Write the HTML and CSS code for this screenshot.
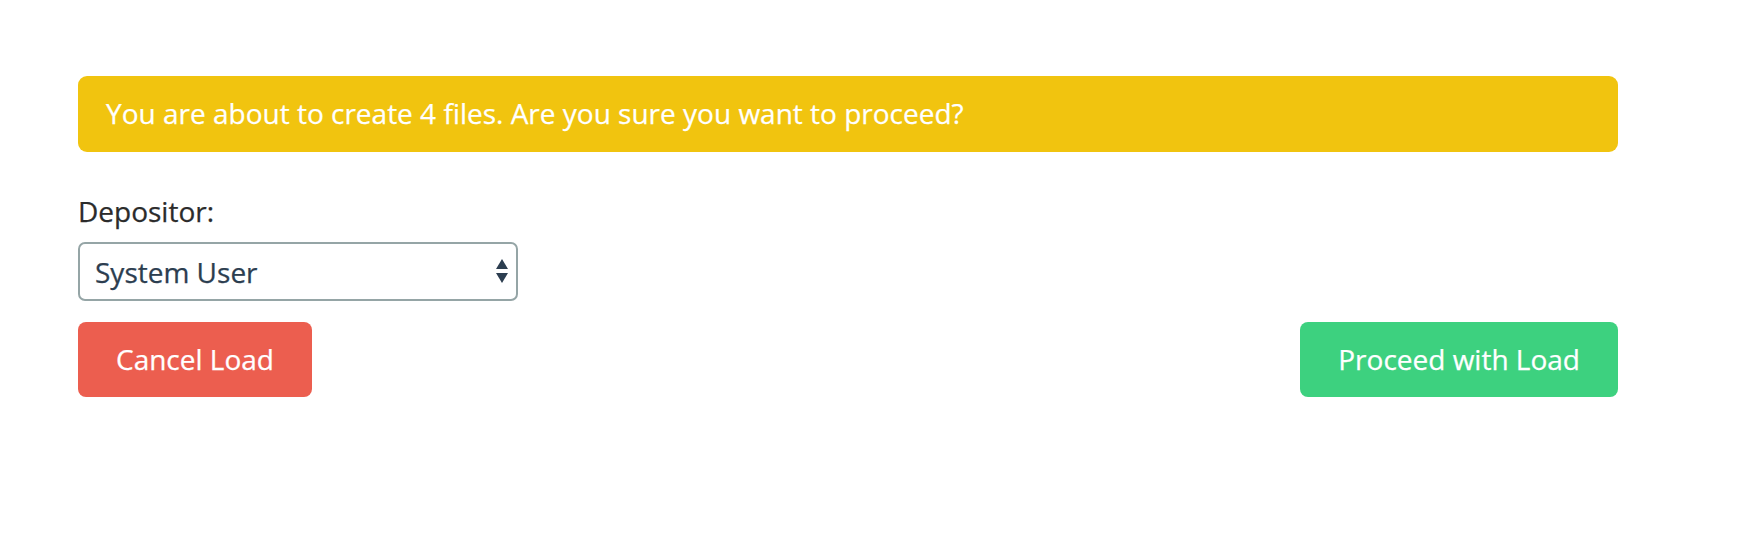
FILE: index.html
```html
<!DOCTYPE html>
<html lang="en">
<head>
<meta charset="utf-8">
<title>Confirm Load</title>
<link rel="stylesheet" href="styles.css">
</head>
<body>
<main class="page">
  <div class="alert">You are about to create 4 files. Are you sure you want to proceed?</div>
  <label class="label" for="depositor">Depositor:</label>
  <div class="select-wrap">
    <select id="depositor" class="select">
      <option>System User</option>
    </select>
    <svg class="select-arrows" width="12" height="26" viewBox="0 0 12 26" aria-hidden="true">
      <path d="M6 0 L12 10 L0 10 Z" fill="#2c3e50"/>
      <path d="M0 14 L12 14 L6 24 Z" fill="#2c3e50"/>
    </svg>
  </div>
  <div class="actions">
    <button class="btn btn-danger" type="button">Cancel Load</button>
    <button class="btn btn-success" type="button">Proceed with Load</button>
  </div>
</main>
</body>
</html>
```

FILE: styles.css
```css
html, body {
  margin: 0;
  padding: 0;
  background: #ffffff;
}

body {
  font-family: "Open Sans", "Noto Sans", "DejaVu Sans", sans-serif;
  font-size: 28px;
  -webkit-text-stroke: 0.25px currentColor;
}

.page {
  width: 1540px;
  padding: 76px 0 0 78px;
  display: flex;
  flex-direction: column;
  align-items: flex-start;
}

.alert {
  box-sizing: border-box;
  width: 100%;
  height: 76px;
  padding: 17px 28px 19px;
  line-height: 40px;
  background: #f1c40f;
  color: #ffffff;
  border-radius: 9px;
}

.label {
  margin-top: 40px;
  line-height: 38px;
  color: #2b2b2b;
}

.select-wrap {
  position: relative;
  margin-top: 12px;
}

.select {
  box-sizing: border-box;
  -webkit-appearance: none;
  appearance: none;
  width: 440px;
  height: 59px;
  margin: 0;
  padding: 9px 15px 8px;
  line-height: 38px;
  font-family: inherit;
  font-size: 28px;
  color: #2c3e50;
  -webkit-text-stroke: 0.25px #2c3e50;
  background: #ffffff;
  border: 2px solid #95a5a6;
  border-radius: 7px;
  outline: none;
}

.select-arrows {
  position: absolute;
  right: 10px;
  top: 17px;
  pointer-events: none;
}

.actions {
  width: 100%;
  margin-top: 21px;
  display: flex;
  justify-content: space-between;
}

.btn {
  box-sizing: border-box;
  height: 75px;
  padding: 18px 38px;
  line-height: 39px;
  font-family: inherit;
  font-size: 28px;
  color: #ffffff;
  -webkit-text-stroke: 0.25px #ffffff;
  border: none;
  border-radius: 8px;
  cursor: pointer;
}

.btn-danger {
  background: #ec5e4f;
}

.btn-success {
  background: #3dd17f;
}
```
